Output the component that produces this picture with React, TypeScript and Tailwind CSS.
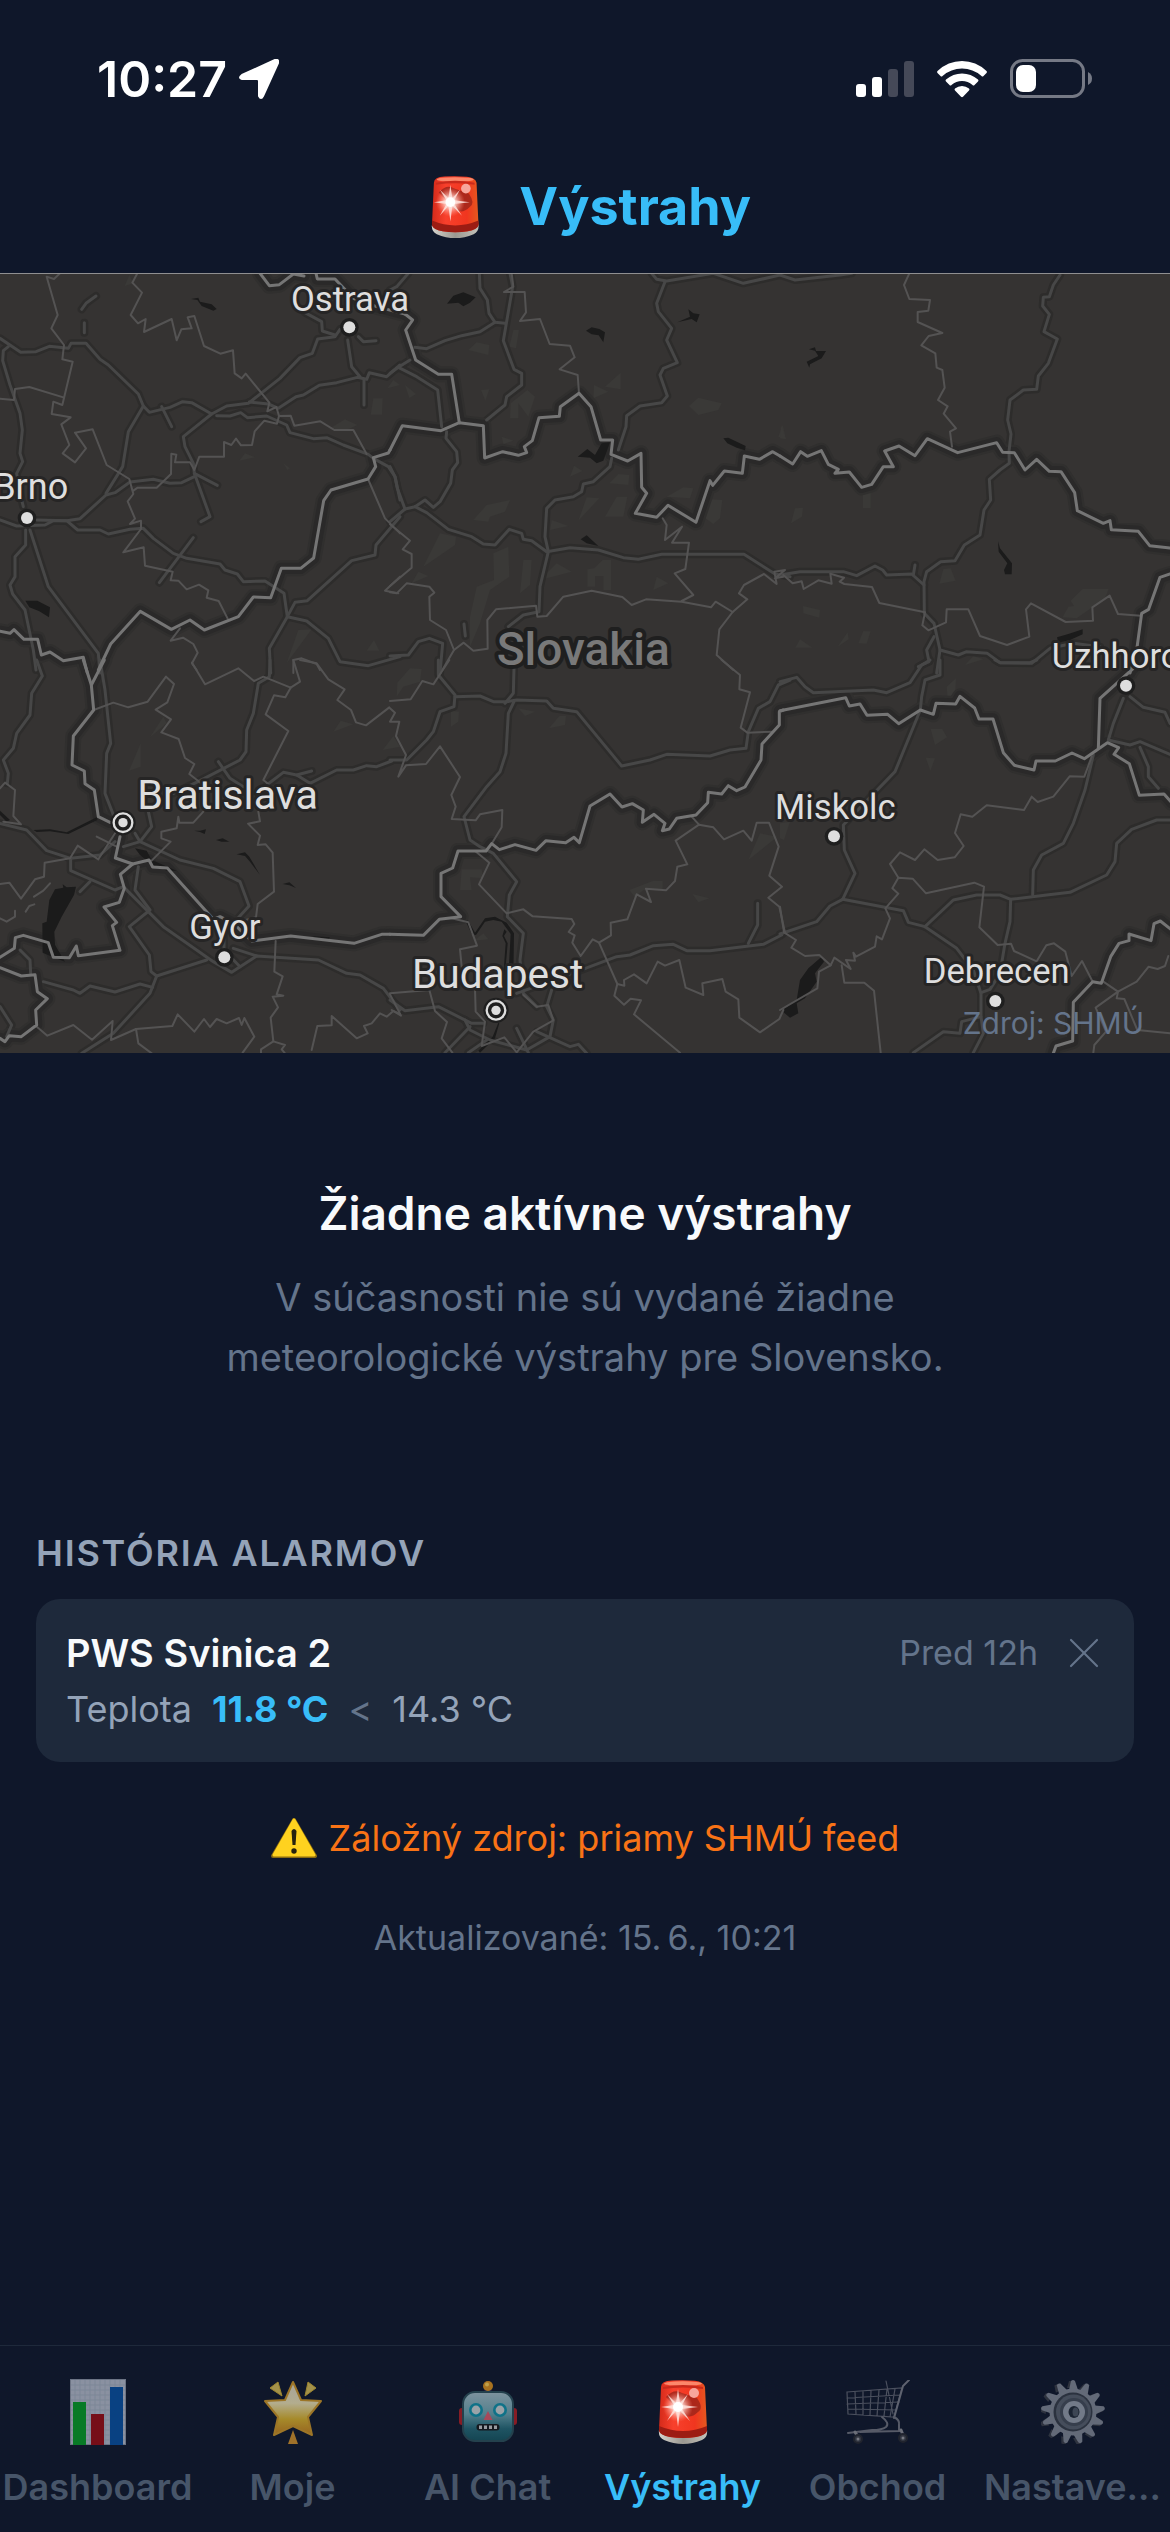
import type { ReactNode } from 'react';
import { X } from 'lucide-react';

interface MapTile {
  at: string;
  borders: string[];
  regions: string[];
  roads: string[];
  water: string[];
  hills: string[];
}

// Map geometry, split into six tiles. Each tile has its own origin.
const TILES: MapTile[] = [
  {
    at: 'translate(0 -9)',
    borders: [
      '780,10 808,47 838,44 880,12 912,18',
      '948,10 952,27 1005,27 1060,85 1130,110 1215,132',
      '0,1084 30,1090 42,1079 72,1108 113,1108 124,1155 150,1146 190,1172 250,1162 262,1209',
      '295,1200 332,1122 421,1024 514,1078 570,1050 613,1080 715,1040 760,981 812,983 844,895 902,895 941,864 971,692 993,660 1104,627 1127,590 1120,563 1165,549 1170,540',
    ],
    regions: [
      '180,10 162,27 140,20 173,135 154,175 192,225 187,268 218,275 187,405 160,395 155,432 212,442 184,463 208,525 188,550 225,577 258,535 225,488 278,478 320,585 388,627 400,672 383,694 405,746 390,762 423,752 423,777 370,847 431,832 435,887 518,905 512,931 535,932 560,958 597,944 625,961 620,983 656,993 683,1046',
      '0,386 42,390 45,357 88,351 190,382',
      '412,10 397,38 426,68 392,135 414,160 437,147 432,186 515,147 530,211 544,178 575,175 563,142 583,138 612,228 661,251 699,241 704,310 725,325 737,311 808,398 802,424 829,411 837,438 872,437 883,467 961,454 1003,480 1060,480 1100,552',
      '400,662 413,653 470,653 513,612 514,551 529,554 525,577 570,577 583,600 598,560 672,560 672,516 694,525 708,506 723,526 756,525 764,484 793,452 831,461 837,438',
      '1104,627 1155,745 1200,790',
      '540,1075 512,1112 549,1103 580,1122 593,1148 576,1180 590,1200',
      '1200,920 1155,962 1195,970',
      '880,1209 880,1170 905,1165 950,1182 960,1200',
    ],
    roads: [
      '0,205 62,247 108,245 148,229 205,235 213,220 258,220 300,268 325,285 415,372 430,408 448,427 510,412 548,395 575,398 635,432 680,408 745,400 840,325 900,263 937,250 953,207 1005,200 1020,178',
      '25,230 10,242 8,272 30,345 60,430 67,480 60,550 68,575 50,610 55,650 70,710',
      '430,408 385,485 368,590 318,670',
      '485,410 515,470',
      '635,432 550,500 555,530 580,580 583,610 630,740 603,755',
      '583,610 652,646',
      '583,620 545,638 510,640 460,628 390,636 345,668 318,675 240,746 200,752 110,750',
      '650,437 690,438 722,428 742,443 800,438 860,465 870,488 940,506 980,503 1030,525 1105,553 1120,565 1165,590 1185,620 1200,690',
      '748,396 805,402 835,415 888,380 910,375 958,346 1010,338 1072,322 1100,328 1108,308 1160,320 1200,285',
      '1043,210 1055,290 1080,320',
      '1092,330 1092,405',
      '0,750 50,768 135,765 160,752 200,752 233,780 300,780 325,792 390,778 430,775 460,805 520,850 560,865 660,882 675,900 712,912 730,935 795,933 852,970 862,1040',
      '580,803 478,938',
      '862,1040 885,997 922,992 1055,872 1125,855 1128,825 1200,740',
      '862,1040 920,1053 985,1105 1020,1175 1105,1187 1200,1160',
      '862,1040 808,1135 812,1209',
      '90,780 145,950 295,1150 300,1209',
      '77,780 77,825 45,860 45,920 30,945 38,972 75,1020 100,1140 108,1200',
      '915,128 965,155 967,183 1005,195',
      '1075,200 1090,215 1128,212',
      '245,118 258,100 288,78',
      '253,158 253,188',
    ],
    water: [
      '573,87 595,83 600,95 635,103 650,117 640,122 605,108 592,90',
      '76,992 112,992 150,1012 147,1042 118,1024 88,1012',
    ],
    hills: [
      '374,48 388,15 400,40',
      '1120,385 1148,385 1146,434 1112,434',
      '985,478 1035,448 1072,465 1040,480',
      '718,572 735,550 765,562',
      '860,1180 895,1080 935,1078',
      '1100,1142 1122,1110 1138,1142',
      '1162,355 1180,330 1200,345',
      '850,580 870,595 862,600',
    ],
  },
  {
    at: 'translate(1170 -9)',
    borders: [
      '0,540 37,467 153,482 208,458 280,467 284,564 338,545 385,556 410,548 403,530 427,512 447,443 508,439 511,410 567,370 603,410 632,510 668,510 663,553 713,573 753,550 755,652 770,670 736,730 800,742 834,706 918,757 960,632 968,646 1003,603 1057,610 1063,558 1108,568 1148,545 1170,558',
      '45,132 68,150 47,180 77,270 145,313 185,313 208,458',
    ],
    regions: [
      '365,10 370,50 342,66 404,66 408,127 390,153 450,147 479,222 540,227 554,262 509,298 563,315 567,370',
      '818,745 830,765 825,810 876,770 846,818 897,818 886,897 854,910 910,975 875,993',
      '0,763 60,812 38,838 65,852 65,893 0,948',
      '0,967 20,970 50,940 118,950 133,968 118,980 120,1050 168,1080 192,1140 157,1200',
      '192,1140 221,1118 250,1142 293,1136 292,1050 318,1018 438,1007 442,1040 470,1038 520,980 605,962 697,981 725,1005 768,988 875,995 963,1012 977,995 1028,1026 988,1078 980,1155 1030,1200',
      '1028,1026 1072,988 1047,970 1062,945 1122,912 1160,942 1153,905 1185,900 1155,925 1180,920',
    ],
    roads: [
      '0,60 20,50 55,10',
      '268,10 270,55 292,90 297,130 315,157 345,160',
      '360,10 368,50 340,212 372,298 395,310 395,345 350,380 345,405 290,450',
      '75,232 110,236 165,212 215,197 270,185 315,157',
      '0,310 25,292 60,270',
      '25,292 80,320 143,360 155,470',
      '170,485 168,505 200,545 203,578 187,600 182,640 150,695 130,712 105,690 75,710 45,717 0,755',
      '0,590 15,620 22,655 45,717',
      '75,710 110,728 175,778 245,800 280,822 315,825 358,778 395,790 400,808 425,812 470,845 540,833 625,840 700,863 745,868 815,853 1062,853 1155,912 1200,920',
      '665,565 660,590 610,635 580,642 575,665 550,680 495,690 470,715 465,800 475,845 450,950 447,1025 400,1035 355,1070',
      '825,35 800,100 805,125 845,175 830,210 862,278 820,295 810,315 832,378 815,398 750,408 710,437 708,470 685,540',
      '785,10 800,28 830,33 970,10 1060,40 1170,15',
      '0,1158 55,1155 85,1115 118,1105 158,1120 150,1209',
      '222,1062 226,1098',
    ],
    water: [
      '171,101 190,77 220,67 257,82 240,98 220,109 205,98',
      '588,182 605,172 628,177 645,187 640,217 626,196 605,193',
      '862,157 900,140 895,118 910,130 929,133 920,157 905,147',
      '563,560 592,537 615,555 635,520 660,517 640,572 620,580 600,563',
      '1000,505 1015,503 1067,528 1065,541 1040,533 1012,520',
      '572,808 590,796 625,828 590,820',
    ],
    hills: [
      '235,240 260,217 298,225 295,255',
      '370,180 387,180 378,235 358,230',
      '645,350 692,308 692,358',
      '610,385 612,345 655,365',
      '897,408 925,383 995,400 985,420 925,435',
      '360,445 362,400 412,360 435,380 415,440 385,400 385,445',
      '250,750 290,705 360,690 345,725 300,740 295,755',
      '565,752 590,682 628,685',
      '645,740 680,680 712,680 700,740',
      '658,640 685,612 718,615 715,645',
      '100,890 150,790 198,800 195,825',
      '310,850 355,830 358,920 300,960 270,1060 240,1130 240,1040 260,950 312,930',
      '390,970 400,870 425,870 420,945',
      '592,950 592,898 612,895 638,870 663,870 663,960 640,960 640,918 615,918 615,950',
      '790,960 800,920 835,940',
      '940,740 965,688 997,690 990,745 970,762',
      '480,780 485,750 535,768',
      '273,360 298,358 286,392',
      '65,940 85,905 115,918',
      '1165,500 1178,465 1188,508',
      '830,680 880,652 910,655 900,685',
      '450,930 500,880 545,905',
      '335,500 370,512 340,522',
      '45,345 78,372 58,384',
      '540,620 552,587 577,603',
    ],
  },
  {
    at: 'translate(2340 -9)',
    borders: [
      '0,558 38,582 62,545 82,559 124,542 145,583 175,598 165,610 208,606 245,652 275,643 310,590 340,590 314,543 357,528 405,557 442,506 533,548 650,518 668,547 703,548 735,600 770,568 808,604 843,605 884,668 892,722 970,760 990,752 994,779 1075,784 1109,827 1170,834',
      '1170,912 1140,922 1106,1018 1085,1030 1070,1140 1050,1209',
    ],
    regions: [
      '388,10 372,45 388,87 450,90 445,122 413,126 413,156 487,189 446,198 424,226 466,250 470,293 487,300 494,353 474,390 503,409 491,431 528,475 510,485 516,530',
      '10,915 38,940 65,934 71,957 115,931 155,941 151,911 192,923 179,935 193,942 276,951 298,999 435,1027 427,1066 445,1081 498,1057 500,1018 565,1018 600,1098 681,1125 748,1100 738,1018 753,1000 857,1056 939,1052 937,1012 989,977 1014,1032 1082,1037',
    ],
    roads: [
      '0,15 45,30 180,15 215,10',
      '840,15 820,45 808,80 790,82 788,108 808,133 792,185 832,207 805,280 775,318 770,358 730,360 690,390 683,450 693,492 687,545 688,580 660,600 628,628 632,690 612,720 600,795 553,825 525,872 482,875 440,905 432,935 433,1030 462,1060 480,1140 535,1155 560,1145 622,1150 660,1178 755,1180 810,1135 880,1120 960,1130',
      '0,915 60,905 190,905 230,917 285,888 308,900 320,915 395,912 432,945',
      '405,885 400,915',
      '462,1100 440,1140 447,1175 415,1190',
      '480,1140 470,1209',
    ],
    water: [
      '87,238 105,232 108,243 138,243 125,265 90,283 88,293 80,275 115,258 105,242',
      '654,814 660,835 696,880 695,913 675,913 672,900 682,880 656,845',
      '831,1102 865,1092 908,1078 908,1093 870,1110 835,1118',
    ],
    hills: [
      '249,667 272,667 272,714 249,714',
      '478,941 490,897 512,895 527,932',
      '33,760 45,715 69,713 66,740',
      '69,1008 120,1020 118,1043 70,1030',
      '46,1133 60,1108 97,1133',
      '173,1130 203,1087 206,1108',
      '235,1120 250,1083 272,1084 260,1121',
      '872,992 908,957 986,957 975,985 890,1045 848,1042 865,1010 882,1008',
      '555,1185 580,1158 610,1168',
      '0,505 3,465 18,508',
    ],
  },
  {
    at: 'translate(0 1161)',
    borders: [
      '250,0 274,75 281,150 220,228 216,315 253,333 255,371 283,390 295,470 330,487',
      '313,0 274,75',
      '360,530 346,594 398,612 447,600 458,621 502,624 640,778 660,770 700,790 755,843 872,828 1062,850 1145,823 1170,823',
      '398,612 361,643 373,685 358,727 312,741 350,787 337,797 360,871 235,887 229,858 208,893 160,892 145,848 70,826 46,833 43,865 0,892',
      '0,923 64,948 105,944 112,995 142,1016 107,1050 110,1095 64,1130 28,1127 15,1145 0,1135',
    ],
    regions: [
      '281,150 340,128 385,142 443,125 498,50 522,72 502,127 467,149 513,178 484,217 536,237 555,294 583,312 568,342 610,375',
      '610,455 580,488 538,488 535,470 530,505 484,515 484,535 512,545 455,602',
      '576,8 615,73 715,25 762,63 790,50 872,83 900,65 880,0',
      '900,0 950,10 985,58 1034,88 1012,120 1053,150 1068,187 1098,196 1168,142',
      '872,83 856,112 822,106 797,163 865,213 790,360 805,372',
      '775,455 780,484 744,491 780,527 773,555 797,553 818,578 822,695 773,732 768,772 700,790',
      '827,843 823,935 848,949 830,1003 850,1007 818,1010 834,1042 812,1073 820,1144 855,1155 845,1168 855,1180',
      '820,1144 783,1168 783,1180',
      '935,1170 952,1098 995,1096 995,1068 1070,1135 1103,1120 1092,1098 1115,1090 1140,1060 1160,1070 1180,1053 1200,1062',
      '107,1097 142,1127 220,1095 276,1139 338,1083 333,1140 408,1107 517,1098 533,1063 583,1115 612,1077 630,1101 650,1077 680,1090 717,1074 725,1095 733,1074 763,1130 728,1178',
      '408,1107 415,1150 455,1180',
      '0,672 28,668 63,716 105,658 132,650 134,608 210,595 233,557 295,598 345,520',
      '0,385 15,368 45,390 40,468 63,493 10,485',
      '290,530 350,560',
      '102,710 130,692 150,670',
      '77,755 88,738 103,733',
      '0,775 20,785 45,770 45,752',
    ],
    roads: [
      '110,0 127,48 95,100 90,165 50,220 40,265 10,300 25,340 22,370',
      '300,0 315,90 332,250 320,280 315,400 350,490',
      '810,0 808,50 775,70 760,160 740,210 738,275 720,300 600,362 520,400',
      '655,305 690,355 730,380',
      '800,375 850,337 890,345 930,370 1010,330 1060,330 1100,317 1130,320 1175,303',
      '890,345 935,333',
      '445,455 455,500 420,545 370,560',
      '405,520 420,545 540,600 640,625 720,665 747,738 700,790',
      '0,490 80,510 140,572 212,595 300,585 345,545',
      '212,595 212,632 345,690 370,680 490,800 640,905 695,937 770,888 955,900 1040,940 1080,945 1150,985 1200,1050',
      '415,620 405,690 450,750 388,800 448,885 453,935 470,948 450,1000 340,1120 245,1180',
      '470,948 620,900',
      '130,965 220,990 240,1000 270,978 345,996 420,972 458,982',
      '672,820 672,870 720,920',
      '700,865 770,888',
      '240,695 270,665',
      '60,870 90,900 92,940',
      '0,1040 35,1095 20,1130',
    ],
    water: [
      '165,688 190,683 188,673 200,682 228,680 222,705 185,770 163,815 165,855 195,905 160,892 128,878 127,790 140,785 148,720',
      '405,565 440,572 455,600 530,632 500,632 450,610 420,585',
      '100,510 150,508 200,517 290,472 292,480 205,522 150,514 110,516',
      '710,583 735,577 748,590 780,645 750,605 735,588',
      '648,540 668,535 688,545 665,545',
      '0,452 30,480 20,485 0,465',
      '848,672 868,667 888,684 868,676',
      '583,512 600,512 618,508 614,522 600,516',
      '940,829 990,832 985,838 942,834',
    ],
    hills: [
      '387,332 422,250 422,320',
      '450,232 490,170 500,190',
      '1000,215 1022,182 1060,193',
      '1148,270 1180,228 1200,260',
    ],
  },
  {
    at: 'translate(1170 1161)',
    borders: [
      '0,823 100,826 148,778 212,770 153,710 153,640 188,624 204,573 288,573 305,551 328,569 375,554 438,571 468,542 527,548 552,532 568,548 600,438 660,402 696,441 727,431 760,450 757,487 792,463 825,490 817,512 838,507 860,475 918,465 953,428 955,397 995,402 1015,377 1040,392 1065,381 1113,300 1116,252 1168,195 1168,155 1180,150',
    ],
    regions: [
      '178,0 130,73 97,63 62,118 0,123',
      '0,145 15,158 0,185 28,185 18,228 48,285 25,350 48,316 108,312 150,259 210,351 184,405 197,440 185,477 257,481 270,463 337,450 335,502 305,551',
      '258,575 298,608 267,673 350,760 400,748 428,769 545,777 553,792 536,816 554,826 547,848 572,888 608,838 627,848 663,826 662,788 712,778 740,703 783,726 768,686 828,691 855,663 862,620 892,613 857,542 927,494 970,502 1002,538 1060,512 1085,542 1100,488 1137,488 1166,560 1138,647 1176,680 1135,713 1168,740 1185,818',
      '905,470 927,494',
      '627,848 682,972 703,977 702,960 732,943 770,970 803,905 825,917 868,900 887,983 940,1005 937,970 997,957 1007,995 1045,1018 1048,1073 1110,1117 1168,1077 1180,1050',
      '682,972 673,1007 702,1034 722,1016 753,1021 732,1063 870,1178',
      '995,0 1050,45 1048,88 1080,97 1052,203 1072,218 1145,215',
      '185,775 235,787 261,857 210,868 215,920',
      '0,1000 118,990 135,1053 171,1086 155,1135 187,1178',
      '0,1003 33,1067 5,1050',
      '255,985 257,1055 285,1085 275,1158 343,1132 380,1177 430,1115 490,1081 475,1035 440,1040 400,1005',
    ],
    roads: [
      '145,0 145,45 195,105 192,140 150,155 130,215 110,240 50,300 0,300',
      '195,110 270,108 310,125 350,125 380,120 470,123 490,145 560,155 695,318 780,300 830,283 960,288 1020,270 1068,265 1075,215 1105,145 1140,125 1165,75 1200,60',
      '372,25 370,100 345,130',
      '372,125 355,160 348,280 330,335 290,380 222,470 240,540 270,560 310,580 380,665 358,705 352,770 400,820 390,900 400,1000 440,1040',
      '380,1000 560,935 680,890 720,885 790,857 850,853 890,872 960,872 1120,853 1175,825',
      '1103,730 1103,795 1075,850',
      '0,1020 45,1052 145,1040 245,1090 280,1090',
      '240,1100 165,1178',
      '225,1080 240,1110 300,1140 410,1170 480,1130 490,1080 470,1040 485,990',
      '290,1140 235,1178',
      '380,1105 415,1178',
      '440,1115 540,1160 565,1153 590,1180',
    ],
    water: [
      '200,778 235,782 255,818 285,775 315,770 350,788 372,820 370,950 355,950 362,822 335,785 310,780 285,785 258,825 245,822 230,790',
      '343,808 350,815 342,828 353,850 345,945 340,945 347,850 337,828',
      '328,1090 315,1135 270,1178 265,1172 308,1130 325,1088',
    ],
    hills: [
      '20,110 22,68 60,25 95,27 90,65 40,80',
      '183,200 183,152 207,155 205,185',
      '477,205 508,168 528,168 525,195',
      '385,145 435,155 405,168',
      '210,690 215,628 275,628 280,655 240,652 245,690',
      '718,690 790,662 818,663 818,690 760,690 735,712',
      '1075,600 1110,520 1162,530',
      '907,702 958,715 925,727',
      '252,842 280,820 295,838',
    ],
  },
  {
    at: 'translate(2340 1161)',
    borders: [
      '0,152 197,113 208,138 240,132 261,166 323,163 356,191 421,150 460,163 468,130 527,132 540,109 584,144 597,177 639,177 670,278 703,316 762,330 768,303 826,303 876,279 913,296 982,248 1016,263 1002,283 1048,311 1078,406 1152,402 1175,428',
      '955,265 960,115 1010,70 1060,25',
      '820,1180 828,1158 878,1143 880,1027 938,965 964,970 992,890 1017,850 1047,842 1047,822 1113,842 1122,791 1141,783 1175,810',
    ],
    regions: [
      '12,817 48,840 34,863 75,888 118,885 152,916 163,893 212,927 198,900 225,902 220,878 228,890 285,860 290,829 306,838 330,775 316,745 355,701 337,685 355,653 398,656 438,700 583,668 612,680 598,802 653,855 693,851 702,873 770,904 799,856 822,850 856,875 875,948 906,903 938,965',
      '355,653 330,612 360,577 405,600 433,568 473,600 524,592 551,558 525,519 542,463 577,470 620,436 732,450 755,410 773,426 820,410 869,349 913,350 935,290',
      '185,916 193,968 253,968 282,992 302,1178',
      '152,916 117,935 112,985 0,1050',
      '970,965 1014,995 1010,1015 1033,1017 1072,1110 1170,1120',
      '1014,995 947,1043 978,1115 943,1155 940,1178',
      '1014,995 1070,965 1106,920 1133,927 1155,918 1165,888',
      '0,740 12,817',
    ],
    roads: [
      '0,65 50,52 75,80 100,98 280,90 320,98 390,68 425,15 450,0',
      '480,0 480,45 435,60 425,110 421,150 345,335 190,495 193,570 225,640 188,718 150,738 110,785 0,822',
      '188,718 370,752 385,787 435,800 530,865 580,930 603,1000 603,1070 545,1085 540,1120 490,1115 400,1178',
      '435,800 520,720 590,705 660,705 692,718 800,705 870,697 980,645 1005,605 1010,550 1055,508 1130,480 1170,480',
      '940,285 915,390 880,490 850,550 785,585 760,630 758,705',
      '692,718 690,785 675,850 660,940 630,988 603,998',
      '603,1070 610,1120 580,1178',
      '1030,115 1000,190 985,240',
      '1050,110 1090,142 1155,157 1170,190',
      '985,240 1050,255 1080,245 1170,283',
      '1080,262 1105,320 1105,350 1135,385',
      '645,0 660,8 750,8 770,0',
    ],
    water: [
      '85,925 125,890 132,905 105,940 110,965 75,1015 50,1030 55,1060 30,1073 5,1052 50,1020 60,960',
    ],
    hills: [
      '452,207 487,207 501,232 465,255',
      '437,293 465,295 451,332',
      '500,80 528,55 525,110 505,145',
      '0,490 30,485 12,540 0,535',
    ],
  },
];

const CITIES = [
  { name: 'Ostrava', x: 1050, y: 113, size: 104, dotX: 1048, dotY: 163 },
  { name: 'Brno', x: 92, y: 679, size: 108, dotX: 81, dotY: 735 },
  { name: 'Uzhhorod', x: 3378, y: 1184, size: 104, dotX: 3378, dotY: 1238 },
  { name: 'Miskolc', x: 2506, y: 1638, size: 104, dotX: 2502, dotY: 1690 },
  { name: 'Gyor', x: 675, y: 1999, size: 104, dotX: 673, dotY: 2053 },
  { name: 'Debrecen', x: 2990, y: 2131, size: 104, dotX: 2986, dotY: 2184 },
  { name: 'Bratislava', x: 683, y: 1608, size: 124, dotX: 369, dotY: 1649, capital: true },
  { name: 'Budapest', x: 1493, y: 2144, size: 122, dotX: 1488, dotY: 2212, capital: true },
];

function Lines({ kind, color, width }: { kind: 'borders' | 'regions' | 'roads'; color: string; width: number }) {
  return (
    <g fill="none" stroke={color} strokeWidth={width} strokeLinejoin="round" strokeLinecap="round">
      {TILES.map((tile) => (
        <g key={tile.at} transform={tile.at}>
          {tile[kind].map((points) => (
            <polyline key={points} points={points} />
          ))}
        </g>
      ))}
    </g>
  );
}

function Areas({ kind, color }: { kind: 'water' | 'hills'; color: string }) {
  return (
    <g fill={color}>
      {TILES.map((tile) => (
        <g key={tile.at} transform={tile.at}>
          {tile[kind].map((points) => (
            <polygon key={points} points={points} />
          ))}
        </g>
      ))}
    </g>
  );
}

function AlertMap() {
  return (
    <svg viewBox="0 3 3510 2337" className="block w-full bg-[#353332]" role="img" aria-label="Mapa výstrah">
      <Areas kind="hills" color="#3a3937" />
      <Lines kind="roads" color="#2d2c2b" width={24} />
      <Lines kind="borders" color="#302f2e" width={48} />
      <Lines kind="borders" color="#2a2929" width={34} />
      <Areas kind="water" color="#1b1b1b" />
      <Lines kind="roads" color="#474747" width={9} />
      <Lines kind="regions" color="#545353" width={6} />
      <Lines kind="borders" color="#757575" width={9} />

      <g fontFamily="Roboto, 'Liberation Sans', sans-serif" textAnchor="middle" paintOrder="stroke" strokeLinejoin="round">
        <text x="1750" y="1176" fontSize="138" fontWeight="500" fill="#797979" stroke="#1f1f1f" strokeWidth="24">
          Slovakia
        </text>
        {CITIES.map((city) => (
          <g key={city.name}>
            {city.capital ? (
              <>
                <circle cx={city.dotX} cy={city.dotY} r="38" fill="#1f1f1f" />
                <circle cx={city.dotX} cy={city.dotY} r="28" fill="none" stroke="#dedede" strokeWidth="7" />
                <circle cx={city.dotX} cy={city.dotY} r="14" fill="#dedede" />
              </>
            ) : (
              <>
                <circle cx={city.dotX} cy={city.dotY} r="28" fill="#1f1f1f" />
                <circle cx={city.dotX} cy={city.dotY} r="18" fill="#dedede" />
              </>
            )}
            <text x={city.x} y={city.y} fontSize={city.size} fill="#dedede" stroke="#262525" strokeWidth="18">
              {city.name}
            </text>
          </g>
        ))}
      </g>
    </svg>
  );
}

function SirenIcon({ className }: { className: string }) {
  return (
    <svg viewBox="0 0 50 64" className={className} aria-hidden="true">
      <defs>
        <linearGradient id="siren-glass" x1="0" y1="0" x2="1" y2="0">
          <stop offset="0" stopColor="#d42a1a" />
          <stop offset="0.3" stopColor="#f8402c" />
          <stop offset="0.75" stopColor="#f0361f" />
          <stop offset="1" stopColor="#e4591f" />
        </linearGradient>
        <linearGradient id="siren-base" x1="0" y1="0" x2="1" y2="0">
          <stop offset="0" stopColor="#d6d4cd" />
          <stop offset="0.5" stopColor="#9a9891" />
          <stop offset="1" stopColor="#c4c2ba" />
        </linearGradient>
        <radialGradient id="siren-glow">
          <stop offset="0" stopColor="#fff" />
          <stop offset="0.35" stopColor="#ffd9d2" stopOpacity="0.9" />
          <stop offset="1" stopColor="#ff8a78" stopOpacity="0" />
        </radialGradient>
      </defs>
      <path d="M1 50Q0 57 6 60Q25 68 44 60Q50 57 49 50Z" fill="url(#siren-base)" />
      <path d="M3 7Q3 1 14 0.6Q25 -0.4 37 0.8Q46 2 47 7L49 50Q48 55 38 57Q25 59 12 57Q2 55 1 50Z" fill="url(#siren-glass)" />
      <path d="M1 46Q25 56 49 46V51Q48 55 38 57Q25 59 12 57Q2 55 1 51Z" fill="#9c1c13" />
      <ellipse cx="25" cy="3.6" rx="19" ry="2.4" fill="#ff9a7c" opacity="0.8" />
      <path d="M5 7Q25 3 45 7V9Q25 6 5 9Z" fill="#c92a1c" />
      <path d="M8 17Q16 8 24 13L39 18Q46 28 40 32Q32 40 24 34Z" fill="#962319" opacity="0.75" />
      <ellipse cx="36" cy="13" rx="5" ry="5" fill="#f7a69c" />
      <circle cx="20" cy="27" r="15" fill="url(#siren-glow)" />
      <path d="M20 9L22 23L30 14L24 25L40 27L24 29L32 41L22 31L20 47L18 31L9 41L16 29L3 27L16 25L9 14L18 23Z" fill="#ffe3dd" opacity="0.85" />
      <circle cx="20" cy="27" r="5" fill="#fff" />
    </svg>
  );
}

function ChartIcon() {
  return (
    <svg viewBox="0 0 56 66" className="h-[66px]" aria-hidden="true">
      <rect width="56" height="66" fill="#8a91a1" />
      <path d="M5 0V66M10 0V66M15 0V66M20 0V66M25 0V66M30 0V66M35 0V66M40 0V66M45 0V66M50 0V66M0 6H56M0 11H56M0 16H56M0 21H56M0 26H56M0 31H56M0 36H56M0 41H56M0 46H56M0 51H56M0 56H56M0 61H56" stroke="#7d8797" strokeWidth="1" />
      <rect x="0.5" y="0.5" width="55" height="65" fill="none" stroke="#6c7484" />
      <rect x="3" y="23" width="13" height="43" fill="#087a26" />
      <rect x="21" y="35" width="13" height="31" fill="#760e18" />
      <rect x="40" y="8" width="13" height="58" fill="#094182" />
    </svg>
  );
}

function StarIcon() {
  return (
    <svg viewBox="0 0 60 64" className="h-16" aria-hidden="true">
      <defs>
        <linearGradient id="star-fill" x1="0" y1="0" x2="0" y2="1">
          <stop offset="0" stopColor="#a5a39b" />
          <stop offset="0.4" stopColor="#b3ad8e" />
          <stop offset="0.7" stopColor="#a68a2a" />
          <stop offset="1" stopColor="#96631f" />
        </linearGradient>
      </defs>
      <path d="M30 2L38 20L58 21L45 37L49 55L30 46L11 55L15 37L2 21L22 20Z" fill="url(#star-fill)" stroke="#9c7527" strokeWidth="2" strokeLinejoin="round" />
      <path d="M7 8L15 2L19 16ZM53 8L45 2L42 16Z" fill="#a4924a" stroke="#9c852f" strokeLinejoin="round" />
      <path d="M30 50L35 64H25Z" fill="#a0722a" />
    </svg>
  );
}

function RobotIcon() {
  return (
    <svg viewBox="0 0 58 62" className="h-[62px]" aria-hidden="true">
      <defs>
        <linearGradient id="robot-face" x1="0" y1="0" x2="0" y2="1">
          <stop offset="0" stopColor="#7e939e" />
          <stop offset="0.45" stopColor="#53808d" />
          <stop offset="0.75" stopColor="#1f5463" />
          <stop offset="1" stopColor="#144552" />
        </linearGradient>
      </defs>
      <rect x="0" y="27" width="7" height="17" rx="3" fill="#861c25" />
      <rect x="51" y="27" width="7" height="17" rx="3" fill="#861c25" />
      <path d="M22 12Q29 6 36 12Q29 18 22 12Z" fill="#4d3b72" />
      <circle cx="29" cy="5" r="5" fill="#a8721f" />
      <circle cx="28" cy="3.5" r="2" fill="#c0a04a" />
      <rect x="4" y="11" width="50" height="49" rx="12" fill="url(#robot-face)" stroke="#24414d" strokeWidth="2" />
      <ellipse cx="17" cy="29" rx="7" ry="7" fill="#0f7288" />
      <ellipse cx="41" cy="29" rx="7" ry="7" fill="#0f7288" />
      <circle cx="17" cy="29" r="4.4" fill="#9aa3a8" />
      <circle cx="41" cy="29" r="4.4" fill="#9aa3a8" />
      <path d="M29 30L33.500 39H24.500Z" fill="#a8485a" />
      <rect x="17.500" y="43" width="23" height="6.500" rx="3" fill="#15191f" />
      <path d="M20 44.500h3v3.500h-3zM25 44.500h3v3.500h-3zM30 44.500h3v3.500h-3zM35 44.500h3v3.500h-3z" fill="#989ba0" />
    </svg>
  );
}

function CartIcon() {
  return (
    <svg viewBox="0 0 64 64" className="h-16" fill="none" strokeLinecap="round" aria-hidden="true">
      <path d="M1 12L56 8L48 37L2 34ZM1 18L54 15M1 24L53 22M2 29L50 30M9 12L10 34M17 11L17 35M25 11L24 35M33 10L31 36M41 9L38 36M49 9L44 37M40 1L47 34" stroke="#4b505e" strokeWidth="1.200" />
      <path d="M63 0L57 6L48 38" stroke="#5e626f" strokeWidth="2" />
      <path d="M36 37Q44 43 40 47Q36 50 26 50L2 53M48 37Q54 40 53 45V51L14 52" stroke="#565a67" strokeWidth="2" />
      <path d="M9 52L12 57M55 50L57 55" stroke="#6c6f79" strokeWidth="3" />
      <circle cx="12" cy="59" r="4" fill="#353944" stroke="#20242e" strokeWidth="2" />
      <circle cx="57" cy="58" r="4" fill="#353944" stroke="#20242e" strokeWidth="2" />
      <circle cx="12" cy="59" r="1.500" fill="#777a83" />
      <circle cx="57" cy="58" r="1.500" fill="#777a83" />
    </svg>
  );
}

function GearIcon() {
  const teeth = Array.from({ length: 13 }, (_, i) => (i * 360) / 13);
  return (
    <svg viewBox="0 0 64 64" className="h-16" aria-hidden="true">
      <g fill="#2e333f">
        {teeth.map((angle) => (
          <path key={angle} d="M26 8L28 1H32L34 8Z" transform={`rotate(${angle} 30 33)`} />
        ))}
      </g>
      <g fill="#636a78">
        {teeth.map((angle) => (
          <path key={angle} d="M28 10L30 1Q32 -1 34 1L37 10Z" transform={`rotate(${angle} 32 32)`} />
        ))}
      </g>
      <circle cx="32" cy="32" r="23.500" fill="#636a78" />
      <circle cx="32" cy="32" r="19.500" fill="#2b323f" />
      <circle cx="32.500" cy="32" r="17.500" fill="#454d5b" />
      <circle cx="33" cy="32" r="14" fill="#363e4c" />
      <circle cx="33" cy="32" r="11" fill="#727a88" />
      <ellipse cx="33" cy="32" rx="5.500" ry="6" fill="#1b2432" />
      <ellipse cx="34.500" cy="32" rx="3" ry="4.500" fill="#3d4654" />
    </svg>
  );
}

function WarningIcon() {
  return (
    <svg viewBox="0 0 46 41" className="h-[41px]" aria-hidden="true">
      <path d="M23 2L44 38H2Z" fill="#8a6a10" stroke="#8a6a10" strokeWidth="4" strokeLinejoin="round" />
      <path d="M23 2L43 37H3Z" fill="#ffd21f" stroke="#ffd21f" strokeWidth="3" strokeLinejoin="round" />
      <path d="M20.500 13Q23 9 25.500 13L24.500 27H21.500Z" fill="#26220f" />
      <circle cx="23" cy="33" r="2.700" fill="#26220f" />
    </svg>
  );
}

function StatusBar() {
  return (
    <div className="flex h-[153px] items-center justify-between pt-1 pr-[78px] pl-[97px] text-white">
      <div className="flex items-center gap-3">
        <span className="text-[50px] leading-[60px] font-semibold">10:27</span>
        <svg viewBox="0 0 40 40" className="h-10" fill="currentColor" aria-hidden="true">
          <path d="M36 1Q40 0 39 4L24 37Q22 41 20 37V22Q20 20 18 20H3Q-1 19 3 16Z" strokeWidth="2" stroke="currentColor" strokeLinejoin="round" />
        </svg>
      </div>
      <div className="flex items-center gap-[22px]">
        <svg viewBox="0 0 58 38" className="h-[38px]" fill="currentColor" aria-hidden="true">
          <rect x="0" y="24" width="10" height="13" rx="3" />
          <rect x="16" y="17" width="10" height="20" rx="3" />
          <g fill="#454958">
            <rect x="32" y="9" width="10" height="28" rx="3" />
            <rect x="48" y="1" width="10" height="36" rx="3" />
          </g>
        </svg>
        <svg viewBox="0 0 52 38" className="h-[38px]" fill="currentColor" aria-hidden="true">
          <path d="M26 1Q40 1 50.500 11Q51.500 12 50.500 13L47.500 16Q46.500 17 45.500 16Q37 8.500 26 8.500Q15 8.500 6.500 16Q5.500 17 4.500 16L1.500 13Q0.500 12 1.500 11Q12 1 26 1Z" />
          <path d="M26 13.500Q35 13.500 42 19.500Q43 20.500 42 21.500L38.500 25Q37.500 26 36.500 25Q32 21 26 21Q20 21 15.500 25Q14.500 26 13.500 25L10 21.500Q9 20.500 10 19.500Q17 13.500 26 13.500Z" />
          <path d="M26 26Q30 26 33 28.500Q34 29.500 33 30.500L27 36.800Q26 37.600 25 36.800L19 30.500Q18 29.500 19 28.500Q22 26 26 26Z" />
        </svg>
        <svg viewBox="0 0 82 40" className="h-10" aria-hidden="true">
          <rect x="1.500" y="1.500" width="72" height="36" rx="11" fill="none" stroke="#757985" strokeWidth="3" />
          <path d="M78 13Q82 15 82 19.500Q82 24 78 26Z" fill="#757985" />
          <rect x="6" y="6" width="20" height="27" rx="7" fill="#fff" />
        </svg>
      </div>
    </div>
  );
}

interface TabItem {
  label: string;
  icon: ReactNode;
  active?: boolean;
}

const TABS: TabItem[] = [
  { label: 'Dashboard', icon: <ChartIcon /> },
  { label: 'Moje', icon: <StarIcon /> },
  { label: 'AI Chat', icon: <RobotIcon /> },
  { label: 'Výstrahy', icon: <SirenIcon className="h-16" />, active: true },
  { label: 'Obchod', icon: <CartIcon /> },
  { label: 'Nastave...', icon: <GearIcon /> },
];

export default function App() {
  return (
    <div className="flex min-h-screen flex-col overflow-x-hidden bg-[#0f172a] font-[Inter,'Liberation_Sans',sans-serif]">
      <StatusBar />

      <header className="flex h-[121px] items-center justify-center gap-10 border-b border-[#8f8f90] pb-3 pl-3">
        <SirenIcon className="h-[62px]" />
        <h1 className="text-[52px] leading-[64px] font-bold text-[#38bdf8]">Výstrahy</h1>
      </header>

      <main className="flex-1">
        <div className="relative">
          <AlertMap />
          <span className="absolute right-[26px] bottom-[10px] text-[30px] leading-[40px] text-[#64748b]">Zdroj: SHMÚ</span>
        </div>

        <section className="mx-auto flex max-w-[780px] flex-col items-center px-6 pt-[130px] text-center">
          <h2 className="text-[46px] leading-[60px] font-semibold text-[#f8fafc]">Žiadne aktívne výstrahy</h2>
          <p className="mt-6 text-[38px] leading-[60px] text-[#64748b]">
            V súčasnosti nie sú vydané žiadne meteorologické výstrahy pre Slovensko.
          </p>
        </section>

        <section className="px-9 pt-[144px]">
          <h2 className="text-[36px] leading-[44px] font-semibold tracking-wider text-[#94a3b8] uppercase">
            História alarmov
          </h2>
          <article className="mt-6 flex h-[163px] flex-col justify-center rounded-3xl bg-[#1e293b] pr-6 pl-[30px]">
            <div className="flex items-center justify-between">
              <h3 className="text-[38px] leading-[56px] font-semibold text-[#f8fafc]">PWS Svinica 2</h3>
              <div className="flex items-center gap-5 text-[#64748b]">
                <span className="text-[34px] leading-[44px]">Pred 12h</span>
                <button type="button" aria-label="Odstrániť alarm">
                  <X className="size-[52px]" strokeWidth={1} />
                </button>
              </div>
            </div>
            <div className="flex items-center gap-5 text-[36px] leading-[56px] text-[#94a3b8]">
              <span>Teplota</span>
              <span className="font-bold text-[#38bdf8]">11.8 °C</span>
              <span className="text-[#64748b]">&lt;</span>
              <span>14.3 °C</span>
            </div>
          </article>
        </section>

        <p className="mt-[54px] flex items-center justify-center gap-3 text-[36px] leading-[44px] text-[#f97316]">
          <WarningIcon />
          Záložný zdroj: priamy SHMÚ feed
        </p>
        <p className="mt-14 text-center text-[34px] leading-[44px] text-[#64748b]">Aktualizované: 15.{'\u2009'}6., 10:21</p>
      </main>

      <nav className="grid h-[187px] grid-cols-6 border-t border-[#1e293b] pt-[33px]">
        {TABS.map((tab) => (
          <button
            key={tab.label}
            type="button"
            aria-current={tab.active ? 'page' : undefined}
            className="flex min-w-0 flex-col items-center gap-5"
          >
            <span className="flex h-[66px] items-center">{tab.icon}</span>
            <span
              className={`text-[36px] leading-[44px] font-semibold whitespace-nowrap ${
                tab.active ? 'text-[#38bdf8]' : 'text-[#475569]'
              }`}
            >
              {tab.label}
            </span>
          </button>
        ))}
      </nav>
    </div>
  );
}
